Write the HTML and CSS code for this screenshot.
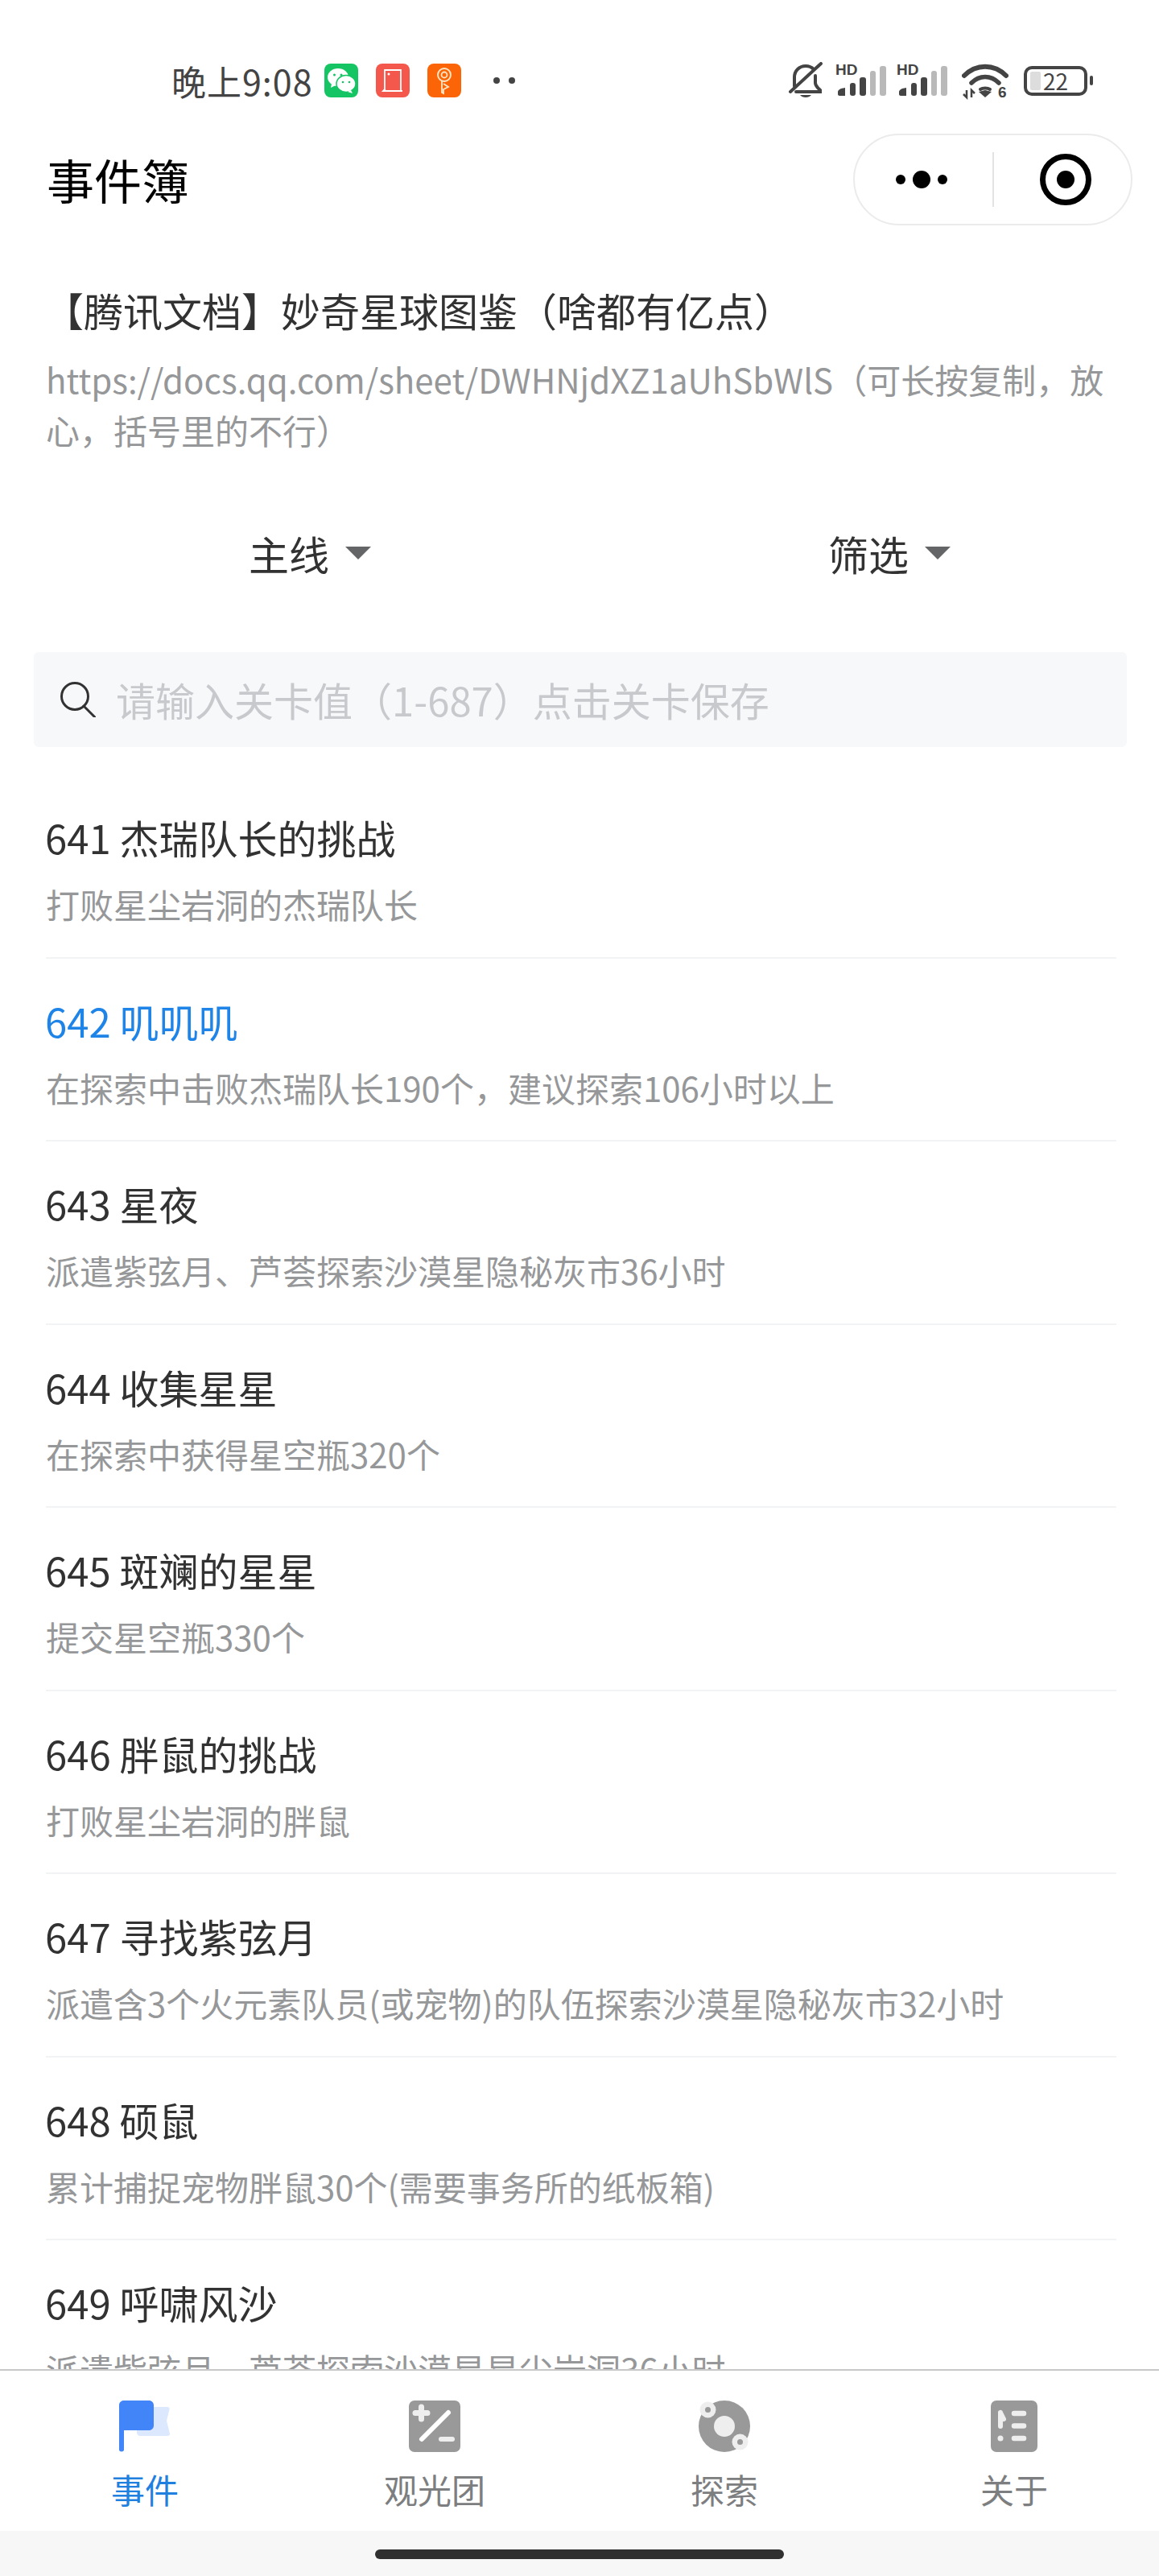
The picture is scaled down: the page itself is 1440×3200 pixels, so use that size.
FILE: index.html
```html
<!DOCTYPE html>
<html lang="zh-CN">
<head>
    <meta charset="UTF-8">
    <meta name="viewport" content="width=device-width, initial-scale=1.0">
    <title>事件簿</title>
    <link rel="stylesheet" href="styles.css">
</head>
<body>
    <div class="page">
        <div class="status-bar">
            <span class="status-time">晚上9:08</span>
            <svg class="app-icon" viewBox="0 0 42 42">
                <rect width="42" height="42" rx="8" fill="#15c463"/>
                <ellipse cx="17" cy="17" rx="13" ry="11" fill="#fff"/>
                <path d="M9 25l-1 5 6-3z" fill="#fff"/>
                <ellipse cx="27" cy="25" rx="12" ry="10.5" fill="#fff" stroke="#15c463" stroke-width="1.5"/>
                <path d="M33 33l2 4-6-2z" fill="#fff"/>
                <circle cx="12.500" cy="14" r="1.500" fill="#15c463"/>
                <circle cx="21" cy="14" r="1.500" fill="#15c463"/>
                <circle cx="23" cy="23" r="1.300" fill="#15c463"/>
                <circle cx="31" cy="23" r="1.300" fill="#15c463"/>
            </svg>
            <svg class="app-icon" viewBox="0 0 42 42">
                <rect width="42" height="42" rx="8" fill="#f4574b"/>
                <path d="M11 8h20v26H13a2 2 0 0 1-2-2z M11 32l-2 2h24" fill="none" stroke="#fff" stroke-width="1.800"/>
                <circle cx="16" cy="13" r="1.500" fill="#fff"/>
            </svg>
            <svg class="app-icon" viewBox="0 0 42 42">
                <rect width="42" height="42" rx="8" fill="#fb6407"/>
                <circle cx="21" cy="14" r="8" fill="none" stroke="#ffe6c4" stroke-width="2"/>
                <circle cx="21" cy="14" r="3.500" fill="none" stroke="#ffe6c4" stroke-width="1.800"/>
                <path d="M18 22v14l2 1v-5l6-3-6-4" fill="none" stroke="#ffe6c4" stroke-width="1.800"/>
            </svg>
            <span class="status-dots"><i></i><i></i></span>

            <div class="status-right">
                <svg class="bell" viewBox="0 0 44 46" fill="none" stroke="#444" stroke-width="4" stroke-linecap="round">
                    <path d="M8 30V19C8 11 14 5 22 5c4 0 7 1 10 4"/>
                    <path d="M34 17v9c0 4 3 6 6 9v2H10"/>
                    <path d="M41 2L3 37"/>
                    <path d="M15 41c3 4 11 4 14 0z" fill="#444" stroke="none"/>
                </svg>
                <svg class="signal" viewBox="0 -5 63 45">
                    <text x="0" y="13" class="signal-text">HD</text>
                    <path d="M3 34c0-2 2-3 4-4l5-1v10H5c-1 0-2-1-2-2z" fill="#444"/>
                    <rect x="18" y="23" width="7" height="16" rx="3" fill="#444"/>
                    <rect x="30" y="16" width="8" height="23" rx="3" fill="#444"/>
                    <rect x="43" y="8" width="7" height="31" rx="3" fill="#b9b9b9"/>
                    <rect x="55" y="2" width="8" height="37" rx="3" fill="#b9b9b9"/>
                </svg>
                <svg class="signal" viewBox="0 -5 63 45">
                    <text x="0" y="13" class="signal-text">HD</text>
                    <path d="M3 34c0-2 2-3 4-4l5-1v10H5c-1 0-2-1-2-2z" fill="#444"/>
                    <rect x="18" y="23" width="7" height="16" rx="3" fill="#444"/>
                    <rect x="30" y="16" width="8" height="23" rx="3" fill="#444"/>
                    <rect x="43" y="8" width="7" height="31" rx="3" fill="#b9b9b9"/>
                    <rect x="55" y="2" width="8" height="37" rx="3" fill="#b9b9b9"/>
                </svg>
                <svg class="wifi" viewBox="0 0 58 48" fill="none" stroke="#444" stroke-width="6" stroke-linecap="round">
                    <path d="M3 15C18 0 40 0 55 15"/>
                    <path d="M12 24C22 14 36 14 46 24" stroke-width="5.500"/>
                    <path d="M23 32c3-2 9-2 12 0" stroke-width="4"/>
                    <path d="M21 35l8-2 8 2-8 7z" fill="#444" stroke="none"/>
                    <path d="M6 33v9l-4-4M12 42v-9l4 4" stroke-width="2.500" stroke-linecap="butt"/>
                    <text x="45" y="42" class="wifi-text">6</text>
                </svg>
                <div class="battery">
                    <div class="battery-body">
                        <span class="battery-fill"></span>
                        <span class="battery-num">22</span>
                    </div>
                    <span class="battery-cap"></span>
                </div>
            </div>
        </div>

        <div class="nav-bar">
            <div class="nav-title">事件簿</div>
            <div class="capsule">
                <div class="capsule-more"><i></i><b></b><i></i></div>
                <div class="capsule-line"></div>
                <div class="capsule-target"><i></i></div>
            </div>
        </div>

        <div class="doc">
            <div class="doc-title">【腾讯文档】妙奇星球图鉴（啥都有亿点）</div>
            <div class="doc-link">https://docs.qq.com/sheet/DWHNjdXZ1aUhSbWlS（可长按复制，放心，括号里的不行）</div>
        </div>

        <div class="filters">
            <div class="filter">主线<span class="arrow"></span></div>
            <div class="filter">筛选<span class="arrow"></span></div>
        </div>

        <div class="search">
            <svg class="search-icon" viewBox="0 0 44 44" fill="none" stroke="#323233" stroke-width="3">
                <circle cx="18" cy="18" r="16.500"/>
                <path d="M29 30l14 14" stroke-linecap="round"/>
            </svg>
            <span class="search-text">请输入关卡值（1-687）点击关卡保存</span>
        </div>

        <div class="list">
            <div class="row">
                <div class="row-title">641 杰瑞队长的挑战</div>
                <div class="row-desc">打败星尘岩洞的杰瑞队长</div>
            </div>
            <div class="row">
                <div class="row-title active">642 叽叽叽</div>
                <div class="row-desc">在探索中击败杰瑞队长190个，建议探索106小时以上</div>
            </div>
            <div class="row">
                <div class="row-title">643 星夜</div>
                <div class="row-desc">派遣紫弦月、芦荟探索沙漠星隐秘灰市36小时</div>
            </div>
            <div class="row">
                <div class="row-title">644 收集星星</div>
                <div class="row-desc">在探索中获得星空瓶320个</div>
            </div>
            <div class="row">
                <div class="row-title">645 斑斓的星星</div>
                <div class="row-desc">提交星空瓶330个</div>
            </div>
            <div class="row">
                <div class="row-title">646 胖鼠的挑战</div>
                <div class="row-desc">打败星尘岩洞的胖鼠</div>
            </div>
            <div class="row">
                <div class="row-title">647 寻找紫弦月</div>
                <div class="row-desc">派遣含3个火元素队员(或宠物)的队伍探索沙漠星隐秘灰市32小时</div>
            </div>
            <div class="row">
                <div class="row-title">648 硕鼠</div>
                <div class="row-desc">累计捕捉宠物胖鼠30个(需要事务所的纸板箱)</div>
            </div>
            <div class="row">
                <div class="row-title">649 呼啸风沙</div>
                <div class="row-desc">派遣紫弦月、芦荟探索沙漠星星尘岩洞36小时</div>
            </div>
        </div>

        <div class="tabbar">
            <div class="tab tab-active">
                <svg class="tab-icon" viewBox="0 0 64 64">
                    <path d="M24 8h36c2 0 3 1 2.500 3L59 25l4 16c.5 2-1 3-3 3H26c-2 0-4-2-4-4V9z" fill="#dce8fd"/>
                    <path d="M6 0h31c3.500 0 6 2.500 6 6v25c0 3.500-2.500 6-6 6H6v24c0 1.500-1 2.500-3 2.500S0 62.500 0 61V6c0-3.500 2.500-6 6-6z" fill="#4285f8"/>
                </svg>
                <span>事件</span>
            </div>
            <div class="tab">
                <svg class="tab-icon" viewBox="0 0 64 64">
                    <rect width="64" height="64" rx="7" fill="#999"/>
                    <path d="M15.500 8v15M8 15.500h15" stroke="#eee" stroke-width="7" stroke-linecap="round"/>
                    <path d="M49 15L16 48" stroke="#fff" stroke-width="6" stroke-linecap="round"/>
                    <path d="M40 48h14" stroke="#eee" stroke-width="6" stroke-linecap="round"/>
                </svg>
                <span>观光团</span>
            </div>
            <div class="tab">
                <svg class="tab-icon" viewBox="0 0 64 64">
                    <circle cx="32" cy="32" r="32" fill="#999"/>
                    <circle cx="32" cy="32" r="13" fill="#eee"/>
                    <circle cx="11.500" cy="11.500" r="10" fill="#eee"/>
                    <circle cx="11.500" cy="11.500" r="3.500" fill="#999"/>
                    <circle cx="51.500" cy="51.500" r="10" fill="#eee"/>
                    <circle cx="51.500" cy="51.500" r="3.500" fill="#999"/>
                </svg>
                <span>探索</span>
            </div>
            <div class="tab">
                <svg class="tab-icon" viewBox="0 0 64 64">
                    <rect x="3" width="58" height="64" rx="7" fill="#999"/>
                    <path d="M15 15v17M15 15l4 8" stroke="#eee" stroke-width="6" stroke-linecap="round" fill="none"/>
                    <circle cx="15" cy="47" r="3.500" fill="#eee"/>
                    <path d="M32 16h12M32 31.500h12M32 47h12" stroke="#eee" stroke-width="6.500" stroke-linecap="round"/>
                </svg>
                <span>关于</span>
            </div>
        </div>

        <div class="home-area">
            <div class="home-bar"></div>
        </div>
    </div>
</body>
</html>
```

FILE: styles.css
```css
* {
    box-sizing: border-box;
}
body {
    margin: 0;
    font-family: "Noto Sans CJK SC", "Noto Sans", sans-serif;
    background-color: white;
    color: #323233;
}
.page {
    height: 3200px;
    display: flex;
    flex-direction: column;
    overflow: hidden;
}

/* status bar */
.status-bar {
    height: 166px;
    flex: none;
    padding: 34px 82px 0 213px;
    display: flex;
    align-items: center;
    color: #444;
}
.status-time {
    width: 190px;
    font-size: 43px;
    line-height: 56px;
    letter-spacing: 1px;
    white-space: nowrap;
}
.app-icon {
    width: 42px;
    height: 42px;
    margin-right: 22px;
}
.status-dots {
    display: flex;
    gap: 11px;
    margin-left: 18px;
}
.status-dots i {
    width: 8px;
    height: 8px;
    border-radius: 50%;
    background-color: #444;
}
.status-right {
    margin-left: auto;
    display: flex;
    align-items: center;
}
.bell {
    width: 44px;
    height: 46px;
    margin-right: 15px;
}
.signal {
    width: 63px;
    height: 45px;
    margin: 0 13px 5px 0;
}
.signal-text {
    font-family: "Liberation Sans", sans-serif;
    font-size: 19px;
    font-weight: 700;
    fill: #444;
}
.wifi {
    width: 58px;
    height: 48px;
    margin: 6px 19px 0 5px;
}
.wifi-text {
    font-family: "Liberation Sans", sans-serif;
    font-size: 19px;
    font-weight: 700;
    fill: #444;
    stroke: none;
}
.battery {
    display: flex;
    align-items: center;
}
.battery-body {
    width: 79px;
    height: 37px;
    border: 4px solid #444;
    border-radius: 10px;
    display: flex;
    align-items: center;
}
.battery-fill {
    width: 13px;
    height: 23px;
    margin-left: 4px;
    background-color: #ddd;
    border-radius: 2px;
}
.battery-num {
    margin-left: 3px;
    font-size: 28px;
    line-height: 29px;
    color: #444;
}
.battery-cap {
    width: 4px;
    height: 12px;
    margin-left: 3px;
    background-color: #444;
    border-radius: 2px;
}

/* wechat nav */
.nav-bar {
    height: 114px;
    flex: none;
    padding: 0 33px 0 58px;
    display: flex;
    align-items: center;
    justify-content: space-between;
}
.nav-title {
    font-size: 59px;
    line-height: 70px;
    color: #000;
}
.capsule {
    width: 347px;
    height: 114px;
    border: 2px solid #ebebeb;
    border-radius: 57px;
    display: flex;
    align-items: center;
}
.capsule-more {
    width: 171px;
    padding-right: 5px;
    display: flex;
    align-items: center;
    justify-content: center;
    gap: 9px;
}
.capsule-more i {
    width: 12px;
    height: 12px;
    border-radius: 50%;
    background-color: #000;
}
.capsule-more b {
    width: 22px;
    height: 22px;
    border-radius: 50%;
    background-color: #000;
}
.capsule-line {
    width: 2px;
    height: 68px;
    background-color: #e2e2e2;
}
.capsule-target {
    width: 64px;
    height: 64px;
    margin-left: 57px;
    border: 7px solid #000;
    border-radius: 50%;
    display: flex;
    align-items: center;
    justify-content: center;
}
.capsule-target i {
    width: 22px;
    height: 22px;
    border-radius: 50%;
    background-color: #000;
}

/* doc info */
.doc {
    padding: 73px 48px 0 57px;
    flex: none;
}
.doc-title {
    margin-left: -2px;
    font-size: 49px;
    line-height: 64px;
}
.doc-link {
    margin-top: 22px;
    font-size: 42px;
    line-height: 63px;
    color: #969799;
    word-break: break-all;
}

/* dropdowns */
.filters {
    height: 100px;
    margin-top: 72px;
    flex: none;
    display: grid;
    grid-template-columns: 1fr 1fr;
}
.filter {
    padding-left: 50px;
    display: flex;
    align-items: center;
    justify-content: center;
    font-size: 50px;
    line-height: 64px;
}
.arrow {
    margin: 0 0 0 20px;
    border-left: 16px solid transparent;
    border-right: 16px solid transparent;
    border-top: 16px solid #646566;
}

/* search */
.search {
    height: 118px;
    margin: 73px 40px 0 42px;
    padding-left: 33px;
    flex: none;
    display: flex;
    align-items: center;
    background-color: #f7f8fa;
    border-radius: 6px;
}
.search-icon {
    width: 44px;
    height: 44px;
    margin-right: 25px;
}
.search-text {
    font-size: 49px;
    line-height: 64px;
    color: #c8c9cc;
}

/* list */
.list {
    flex: 1;
    min-height: 0;
    margin-top: 35px;
    padding: 0 53px 0 57px;
    overflow: hidden;
}
.row {
    height: 227.5px;
    padding-top: 45px;
    border-bottom: 2px solid #f2f3f5;
}
.row-title {
    font-size: 49px;
    line-height: 64px;
    margin-left: -1px;
}
.row-title.active {
    color: #1f84e8;
}
.row-desc {
    margin-top: 21px;
    font-size: 42px;
    line-height: 60px;
    color: #969799;
}

/* tabbar */
.tabbar {
    height: 201px;
    flex: none;
    padding-top: 37px;
    display: grid;
    grid-template-columns: repeat(4, 1fr);
    border-top: 2px solid #c8c8c8;
    background-color: white;
}
.tab {
    display: flex;
    flex-direction: column;
    align-items: center;
    font-size: 42px;
    line-height: 56px;
    color: #7d7e80;
}
.tab-active {
    color: #1f80e0;
}
.tab-icon {
    width: 64px;
    height: 64px;
    margin-bottom: 18px;
}
.home-area {
    height: 56px;
    flex: none;
    padding-top: 23px;
    background-color: #f7f7f7;
}
.home-bar {
    width: 508px;
    height: 12px;
    margin: 0 auto;
    background-color: #303030;
    border-radius: 6px;
}
```
